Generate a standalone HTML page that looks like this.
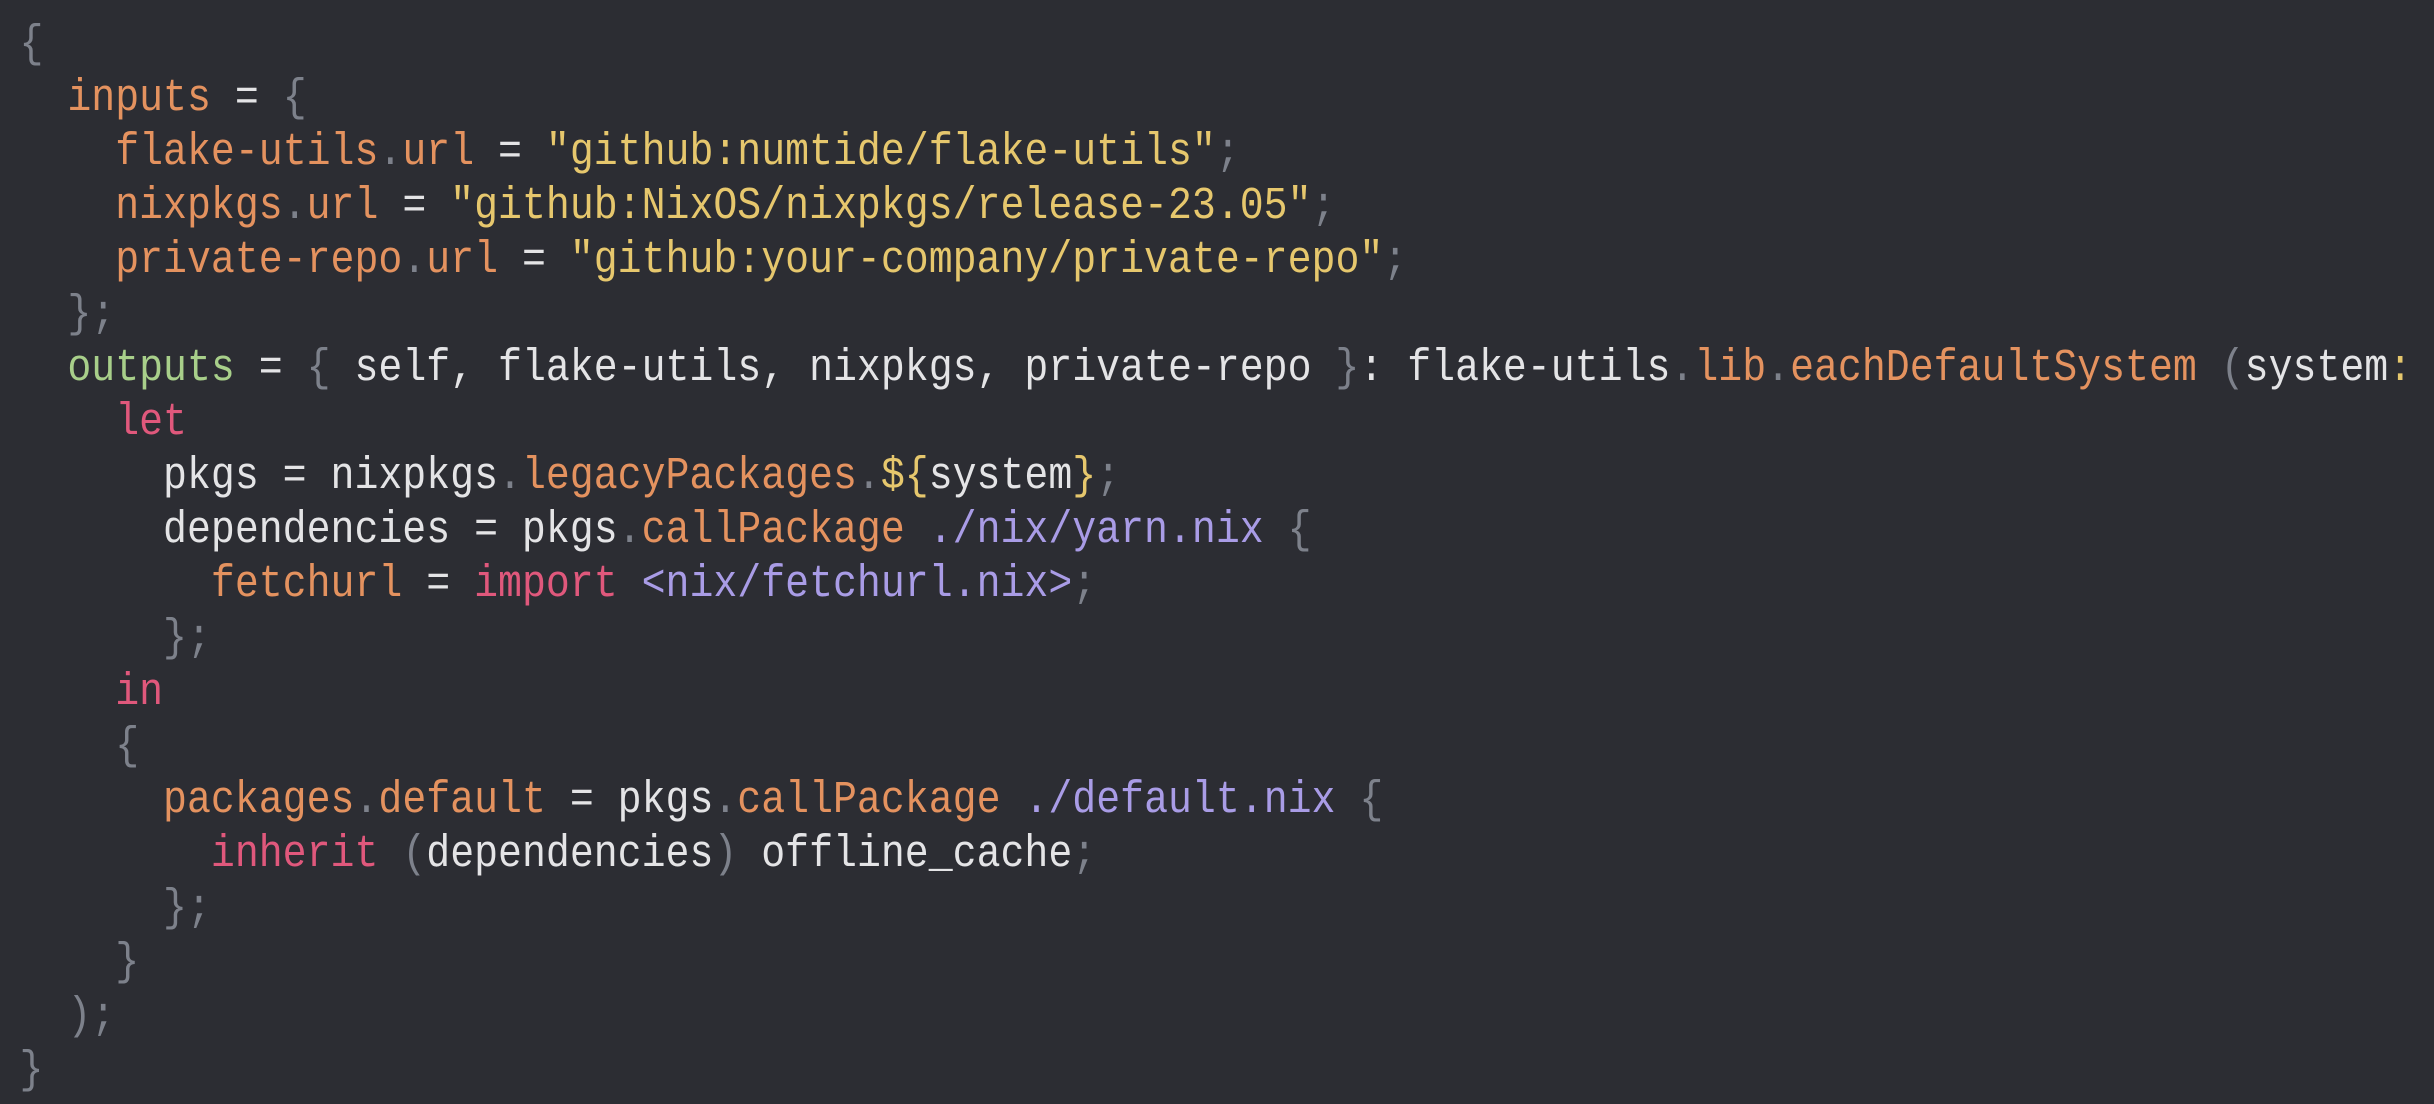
<!DOCTYPE html><html><head><style>
html,body{margin:0;padding:0;background:#2c2d33;width:2434px;height:1104px;overflow:hidden}
pre{margin:0;padding:18px 0 0 22px;font-family:"Liberation Mono",monospace;font-size:45px;line-height:54px;color:#e4e4e6;white-space:pre;transform:scaleX(0.886);transform-origin:0 0}
.p{color:#7d818b}.o{color:#e4925f}.y{color:#e6c76d}.g{color:#a8cf8a}.k{color:#e0587c}.v{color:#a99ce6}
</style></head><body><pre><span class="p">{</span>
  <span class="o">inputs</span> = <span class="p">{</span>
    <span class="o">flake-utils</span><span class="p">.</span><span class="o">url</span> = <span class="y">"github:numtide/flake-utils"</span><span class="p">;</span>
    <span class="o">nixpkgs</span><span class="p">.</span><span class="o">url</span> = <span class="y">"github:NixOS/nixpkgs/release-23.05"</span><span class="p">;</span>
    <span class="o">private-repo</span><span class="p">.</span><span class="o">url</span> = <span class="y">"github:your-company/private-repo"</span><span class="p">;</span>
  <span class="p">};</span>
  <span class="g">outputs</span> = <span class="p">{</span> self, flake-utils, nixpkgs, private-repo <span class="p">}</span>: flake-utils<span class="p">.</span><span class="o">lib</span><span class="p">.</span><span class="o">eachDefaultSystem</span> <span class="p">(</span>system<span class="y">:</span>
    <span class="k">let</span>
      pkgs = nixpkgs<span class="p">.</span><span class="o">legacyPackages</span><span class="p">.</span><span class="y">${</span>system<span class="y">}</span><span class="p">;</span>
      dependencies = pkgs<span class="p">.</span><span class="o">callPackage</span> <span class="v">./nix/yarn.nix</span> <span class="p">{</span>
        <span class="o">fetchurl</span> = <span class="k">import</span> <span class="v">&lt;nix/fetchurl.nix&gt;</span><span class="p">;</span>
      <span class="p">};</span>
    <span class="k">in</span>
    <span class="p">{</span>
      <span class="o">packages</span><span class="p">.</span><span class="o">default</span> = pkgs<span class="p">.</span><span class="o">callPackage</span> <span class="v">./default.nix</span> <span class="p">{</span>
        <span class="k">inherit</span> <span class="p">(</span>dependencies<span class="p">)</span> offline_cache<span class="p">;</span>
      <span class="p">};</span>
    <span class="p">}</span>
  <span class="p">);</span>
<span class="p">}</span></pre></body></html>
